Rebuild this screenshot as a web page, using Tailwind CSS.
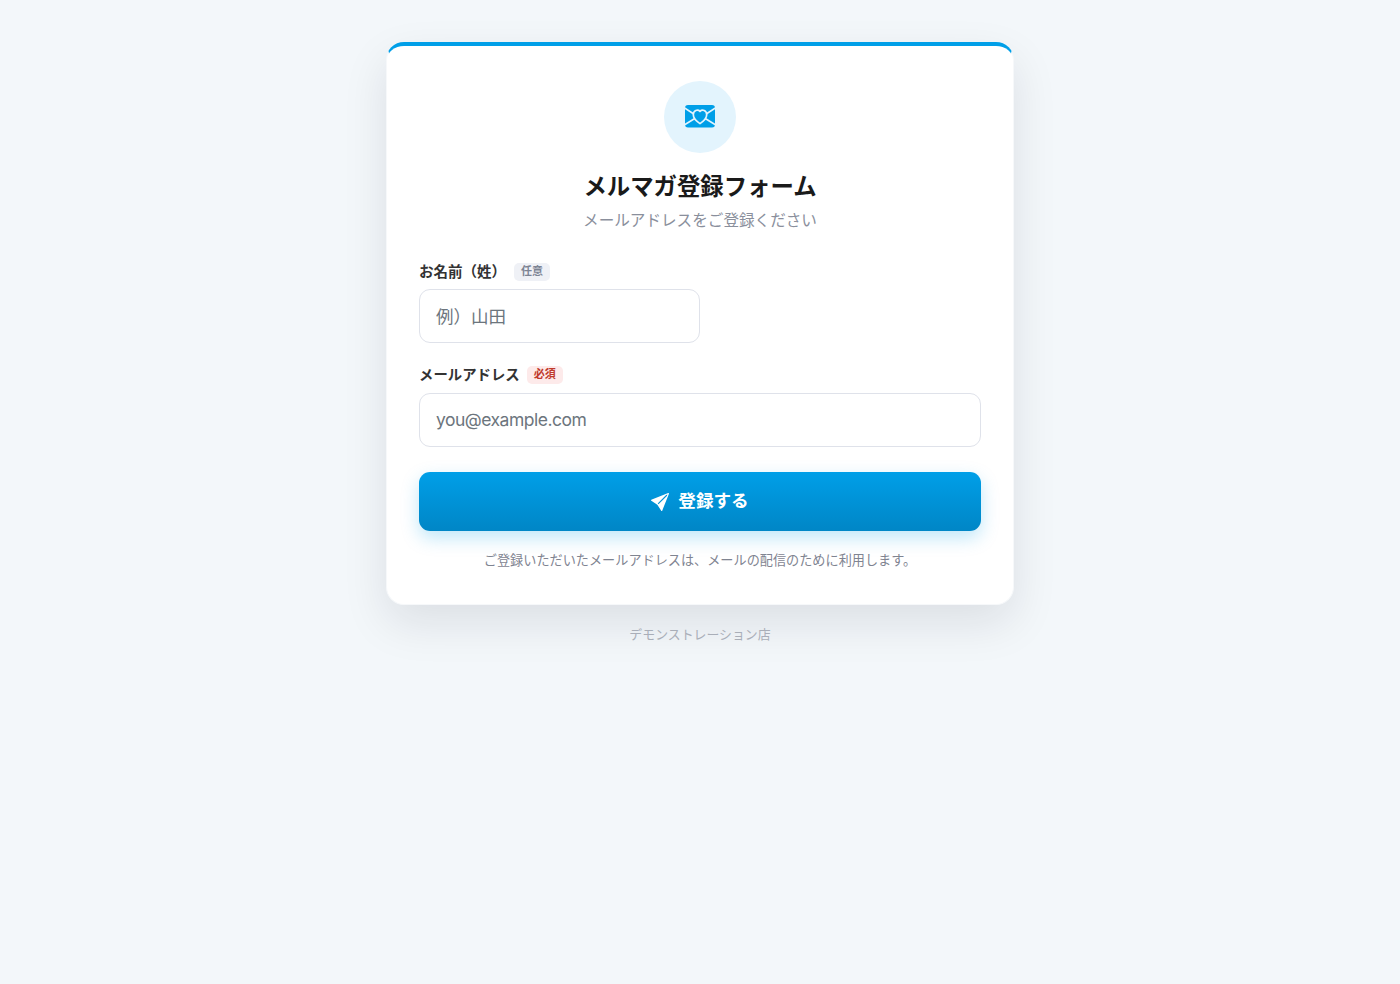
<!DOCTYPE html>
<html lang="ja">
<head>
    <meta charset="UTF-8">
    <meta name="viewport" content="width=device-width, initial-scale=1.0">
    <title>メルマガ登録フォーム</title>
    <script src="https://cdn.jsdelivr.net/npm/@tailwindcss/browser@4"></script>
</head>
<body class="bg-[#f3f7fa] min-h-screen pt-[41.5px] font-['Inter','Noto_Sans_CJK_JP',sans-serif]">
    <main class="w-[628px] mx-auto">
        <div class="h-[563px] bg-white rounded-[18px] border border-[#f6f8fa] border-t-4 border-t-[#009fe8] shadow-[0_18px_45px_rgba(15,23,42,0.10)] px-8 pt-[35.5px]">
            <!-- Cabecera -->
            <div class="flex flex-col items-center">
                <div class="size-[72px] rounded-full bg-[#e3f4fd] flex items-center justify-center">
                    <svg class="w-[30px] h-[23px] mb-[2px]" viewBox="0 0 30 23" fill="none">
                        <rect width="30" height="22.5" rx="3" fill="#009fe8"/>
                        <path d="M-.5 3 10 9.800M30.500 3 20 9.800M-.5 19.800 11 12.800M30.500 19.800 19 12.800" stroke="#e3f4fd" stroke-width="1.700"/>
                        <path d="M15 18.600C10.500 15.600 8.300 13 8.300 9.800C8.300 5.300 12.700 3.900 15 6.300C17.300 3.900 21.700 5.300 21.700 9.800C21.700 13 19.500 15.600 15 18.600Z" fill="#009fe8" stroke="#e3f4fd" stroke-width="1.700"/>
                    </svg>
                </div>
                <h1 class="mt-[16px] text-[23.4px] leading-[35px] font-bold text-[#1a1a1a]">メルマガ登録フォーム</h1>
                <p class="mt-[5px] text-[15.6px] leading-[24px] text-[#8a8f9c]">メールアドレスをご登録ください</p>
            </div>

            <!-- Formulario -->
            <form class="mt-[29px]">
                <div>
                    <label for="nombre" class="flex items-center h-[20px] text-[14.5px] font-bold text-[#333]">お名前（姓）<span class="ml-[8px] h-[18px] px-[7px] rounded-[5px] bg-[#eff1f6] text-[11px] leading-[17px] text-[#7d8494]">任意</span></label>
                    <input type="text" id="nombre" placeholder="例）山田" class="mt-[7px] block w-[281px] h-[54px] rounded-[11px] border border-[#dfe2ea] bg-white px-4 text-[17.5px] placeholder:text-[#6c757d]">
                </div>

                <div class="mt-[22px]">
                    <label for="email" class="flex items-center h-[20px] text-[14.4px] font-bold text-[#333]">メールアドレス<span class="ml-[7px] h-[18px] px-[7px] rounded-[5px] bg-[#fdeaea] text-[11px] leading-[17px] text-[#c0392b]">必須</span></label>
                    <input type="email" id="email" placeholder="you@example.com" class="mt-[8px] block w-full h-[54px] rounded-[11px] border border-[#dfe2ea] bg-white px-4 pb-px text-[17.5px] tracking-[-0.5px] placeholder:text-[#6c757d]">
                </div>

                <button type="submit" class="mt-[25px] w-full h-[59px] flex items-center justify-center gap-[9px] rounded-[11px] bg-linear-to-b from-[#009fe8] to-[#0086c6] shadow-[0_7px_18px_rgba(0,159,232,0.25)] text-[17.6px] font-bold text-white">
                    <svg class="size-[18px]" viewBox="0 0 16 16" fill="currentColor">
                        <path d="M15.964.686a.5.5 0 0 0-.65-.65L.767 5.855H.766l-.452.180a.5.5 0 0 0-.082.887l.410.260.001.002 4.995 3.178 3.178 4.995.002.002.260.410a.5.5 0 0 0 .886-.083zm-1.833 1.890L6.637 10.070l-.215-.338a.5.5 0 0 0-.154-.154l-.338-.215 7.494-7.494 1.178-.471z"/>
                    </svg>
                    登録する
                </button>
            </form>

            <p class="mt-[19px] text-center text-[13.15px] leading-[20px] text-[#7f8491]">ご登録いただいたメールアドレスは、メールの配信のために利用します。</p>
        </div>

        <p class="mt-[20px] text-center text-[12.9px] leading-[20px] text-[#a9aeb8]">デモンストレーション店</p>
    </main>
</body>
</html>
